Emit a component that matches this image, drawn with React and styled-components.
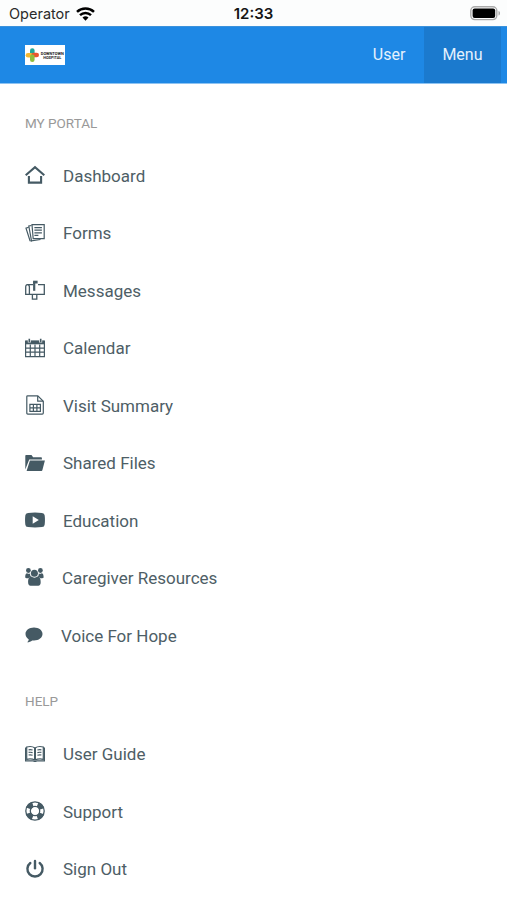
import React from "react";
import styled, { createGlobalStyle } from "styled-components";

const GlobalStyle = createGlobalStyle`
  * {
    box-sizing: border-box;
  }
  body {
    margin: 0;
    background: #fff;
    font-family: Roboto, "Liberation Sans", sans-serif;
  }
`;

const Screen = styled.div`
  width: 100%;
  height: 900px;
  overflow: hidden;
  background: #fff;
`;

const StatusBar = styled.div`
  display: grid;
  grid-template-columns: 1fr auto 1fr;
  align-items: center;
  height: 26px;
  padding: 1px 6px 0 9px;
  background: #fcfdfd;
  color: #2a2b2b;
  font-family: Inter, "Liberation Sans", sans-serif;
  font-size: 14.5px;
`;

const Carrier = styled.div`
  display: flex;
  align-items: center;
  gap: 6px;
`;

const Clock = styled.span`
  margin-right: 3px;
  color: #151515;
  font-size: 15px;
  font-weight: 600;
`;

const Battery = styled.svg`
  justify-self: end;
`;

const NavBar = styled.header`
  display: flex;
  align-items: stretch;
  height: 58px;
  padding: 0 6px 0 25px;
  background: #1e88e5;
  border-top: 1px solid #3b92dc;
  border-bottom: 1px solid #8dc3f2;
`;

const Logo = styled.div`
  display: flex;
  align-items: center;
  align-self: center;
  width: 40px;
  height: 20px;
  margin-right: auto;
  background: #fff;
`;

const NavItem = styled.a`
  display: flex;
  align-items: center;
  padding: 0 18.5px 2px;
  background: ${props => (props.$active ? "#1b7ace" : "transparent")};
  color: #e4f1fd;
  font-size: 16px;
`;

const SectionTitle = styled.h2`
  height: 61px;
  margin: ${props => (props.$first ? "2px" : "0")} 0 0;
  padding: ${props => (props.$first ? "29px" : "28px")} 25px 0;
  color: #999;
  font-size: 13.5px;
  font-weight: 400;
  line-height: 17px;
`;

const Menu = styled.ul`
  margin: 0;
  padding: 0;
  list-style: none;
`;

const MenuItem = styled.li`
  display: flex;
  align-items: center;
  height: 57.5px;
  padding-left: 25px;
  color: #455a64;
`;

const IconBox = styled.svg`
  flex: none;
  width: 20px;
  height: 20px;
  margin-right: ${props => props.$gap}px;
  margin-bottom: 1px;
`;

const Label = styled.span`
  color: #4e5e66;
  font-size: 17px;
  line-height: 20px;
`;

const line = { fill: "none", stroke: "currentColor", strokeWidth: 1.2 };

const icons = {
  home: (
    <g {...line} strokeWidth="2.1">
      <path d="M.7 10.2 10 2.2l9.3 8" />
      <path d="M3.9 11v6.6h12.2V11" />
    </g>
  ),
  forms: (
    <g {...line}>
      <path d="M7 1.7h12.2v14H8.2z" fill="#fff" />
      <path d="M6.5 2.5 3.8 3l2.7 14.9 9-1.4" />
      <path d="M3.7 4.3 1 5.2l4 12.6 2 .2" />
      <path d="M9.4 4.6h7.5M9.4 7.2h7.5M9.4 9.8h7.5M9.4 12.3h4" />
    </g>
  ),
  messages: (
    <g {...line} strokeWidth="1.3">
      <path d="M8 4.7H2.4C1.2 4.7.7 5.6.7 7v7.4h18.6V4.7H13" />
      <path d="M4.4 14.4V7c0-1.4-.7-2.3-1.8-2.3" />
      <path d="M7.4 14.4v4.8h4.4v-4.8" />
      <path d="M9.2 10.8V1.6" strokeWidth="2.2" />
      <path d="M8.1.7h4.5v2.8H8.1z" fill="currentColor" stroke="none" />
    </g>
  ),
  calendar: (
    <g {...line}>
      <path d="M.6 3.3h18.8v15.3H.6z" />
      <path d="M.3 2.5h19.4v3.8H.3z" fill="currentColor" stroke="none" />
      <path d="M.6 10.2h18.8M.6 14.2h18.8M5.3 6.5v12M10 6.5v12M14.7 6.5v12" />
      <path d="M4.3 1v3.6M15.7 1v3.6" stroke="#fff" strokeWidth="3" />
      <path d="M4.3.7v3.5M15.7.7v3.5" strokeWidth="1.6" />
    </g>
  ),
  summary: (
    <g {...line}>
      <path d="M2.6.8h10.2l5.5 5.4v11.9c0 .7-.3 1-1 1H2.8c-.7 0-1-.3-1-1V1.6c0-.5.3-.8.8-.8z" />
      <path d="M12.7 1v5.2h5.4" />
      <path d="M4.9 9.3h10.5v7H4.9zM4.9 12.8h10.5M8.4 9.3v7M11.9 9.3v7" />
    </g>
  ),
  folder: (
    <g fill="currentColor">
      <path d="M.3 16.5V2.8c0-.6.2-.8.8-.8h5.4l1.6 2.2h8c.6 0 .8.3.8.8v1.4H4.2z" />
      <path d="M4.9 7.5h15L17.4 17c-.2.8-.5 1.1-1.2 1.1H1.6z" />
    </g>
  ),
  video: (
    <g>
      <path
        d="M3 2.9q7-.7 14 0 2.5.1 2.7 2.6.5 4.5 0 9-.2 2.5-2.7 2.6-7 .7-14 0-2.5-.1-2.7-2.6-.5-4.5 0-9Q.5 3 3 2.9z"
        fill="currentColor"
      />
      <path d="m7.7 6.3 6.1 3.7-6.1 3.7z" fill="#fff" />
    </g>
  ),
  people: (
    <g fill="currentColor">
      <circle cx="3.4" cy="2.5" r="2.4" />
      <circle cx="15.4" cy="2.5" r="2.4" />
      <circle cx="9.4" cy="5.2" r="3.5" />
      <path d="M.2 9.1c0-2.5.6-3.9 2-3.9.8.6 2 .7 2.9.3-.1 1.7.3 2.7 1 3.5-1 0-2 .5-2.7 1.3H1.5C.6 10.3.2 9.9.2 9.1zM18.6 9.1c0-2.5-.6-3.9-2-3.9-.8.6-2 .7-2.9.3.1 1.7-.3 2.7-1 3.5 1 0 2 .5 2.7 1.3h1.9c.9 0 1.3-.4 1.3-1.2z" />
      <path d="M6.2 8.6c2 1.4 4.4 1.4 6.4 0 2.3 0 3.1 2.6 3.1 5.7 0 2.3-.9 3.5-2.4 3.5H5.5c-1.5 0-2.4-1.2-2.4-3.5 0-3.1.8-5.7 3.1-5.7z" />
    </g>
  ),
  chat: (
    <path
      d="M9 2.6c4.8 0 8.5 2.8 8.5 6.4s-3.7 6.5-8.5 6.5l-1.8-.1c-1.3 1.1-3 1.8-5 1.9.9-.9 1.4-1.8 1.6-2.9C1.8 13.2.5 11.2.5 9 .5 5.4 4.2 2.6 9 2.6z"
      fill="currentColor"
    />
  ),
  book: (
    <g {...line}>
      <path d="M10 4C8 2.6 4.5 2.2 1.7 3v12.3c3-.7 6.2-.3 8.3.8 2.1-1.1 5.3-1.5 8.3-.8V3C15.5 2.2 12 2.6 10 4z" />
      <path d="M10 4v12" strokeWidth="2" />
      <path d="M1.8 4H.6v12.9h7.8c.8.6 2.4.6 3.2 0h7.8V4h-1.2" />
      <path d="M3.6 5.8q2-.4 4 .2M3.6 8.4q2-.4 4 .2M3.6 11q2-.4 4 .2M12.4 6q2-.6 4-.2M12.4 8.6q2-.6 4-.2M12.4 11.2q2-.6 4-.2" />
    </g>
  ),
  support: (
    <g fill="none" stroke="currentColor">
      <circle cx="10" cy="10" r="9.2" strokeWidth="1.3" />
      <circle cx="10" cy="10" r="4.7" strokeWidth="1.3" />
      <circle
        cx="10"
        cy="10"
        r="7"
        strokeWidth="5"
        strokeDasharray="6.1 4.9"
        strokeDashoffset="-2.45"
      />
    </g>
  ),
  power: (
    <g fill="none" stroke="currentColor" strokeWidth="2.4" strokeLinecap="round">
      <path d="M5.3 4a7.6 7.6 0 1 0 9.4 0" />
      <path d="M10 1.9v7.3" />
    </g>
  )
};

const portalItems = [
  { icon: "home", label: "Dashboard" },
  { icon: "forms", label: "Forms" },
  { icon: "messages", label: "Messages" },
  { icon: "calendar", label: "Calendar" },
  { icon: "summary", label: "Visit Summary" },
  { icon: "folder", label: "Shared Files" },
  { icon: "video", label: "Education" },
  { icon: "people", label: "Caregiver Resources", gap: 17 },
  { icon: "chat", label: "Voice For Hope", gap: 16 }
];

const helpItems = [
  { icon: "book", label: "User Guide" },
  { icon: "support", label: "Support" },
  { icon: "power", label: "Sign Out" }
];

function MenuList({ items }) {
  return (
    <Menu>
      {items.map(({ icon, label, gap = 18 }) => (
        <MenuItem key={label}>
          <IconBox viewBox="0 0 20 20" $gap={gap}>
            {icons[icon]}
          </IconBox>
          <Label>{label}</Label>
        </MenuItem>
      ))}
    </Menu>
  );
}

function HospitalLogo() {
  return (
    <svg width="40" height="20" viewBox="0 0 40 20">
      <g strokeWidth="4.6" strokeLinecap="round" fill="none">
        <path d="M7.3 5.6v3" stroke="#20a89b" />
        <path d="M3 10.2h3" stroke="#f4b731" />
        <path d="M8.7 10h3" stroke="#e9552f" />
        <path d="M7.3 11.7v3" stroke="#8fbd3d" />
      </g>
      <g
        fill="#222"
        fontFamily="Roboto, sans-serif"
        fontSize="4"
        fontWeight="700"
        textAnchor="middle"
      >
        <text x="27.3" y="10" textLength="23" lengthAdjust="spacingAndGlyphs">
          DOWNTOWN
        </text>
        <text x="27.3" y="13.8" textLength="18" lengthAdjust="spacingAndGlyphs">
          HOSPITAL
        </text>
      </g>
    </svg>
  );
}

function App() {
  return (
    <>
      <GlobalStyle />
      <Screen>
        <StatusBar>
          <Carrier>
            Operator
            <svg width="19" height="14" viewBox="0 0 19 14">
              <g fill="none" stroke="#000" strokeWidth="2.5">
                <path d="M1 4.9a12.3 12.3 0 0 1 17 0" />
                <path d="M4 8.2a8 8 0 0 1 11 0" />
              </g>
              <path d="M6.5 10.6a4.3 4.3 0 0 1 6 0l-3 3.1z" />
            </svg>
          </Carrier>
          <Clock>12:33</Clock>
          <Battery width="31" height="15" viewBox="0 0 31 15">
            <rect x=".8" y=".8" width="26" height="12.8" rx="4" fill="#fff" stroke="#aaa" strokeWidth="1.4" />
            <rect x="2.6" y="2.6" width="22.6" height="9.3" rx="2" />
            <path d="M28.5 5v4.5c2-.5 2-4 0-4.5z" fill="#aaa" />
          </Battery>
        </StatusBar>
        <NavBar>
          <Logo>
            <HospitalLogo />
          </Logo>
          <NavItem>User</NavItem>
          <NavItem $active>Menu</NavItem>
        </NavBar>
        <SectionTitle $first>MY PORTAL</SectionTitle>
        <MenuList items={portalItems} />
        <SectionTitle>HELP</SectionTitle>
        <MenuList items={helpItems} />
      </Screen>
    </>
  );
}

export default App;
